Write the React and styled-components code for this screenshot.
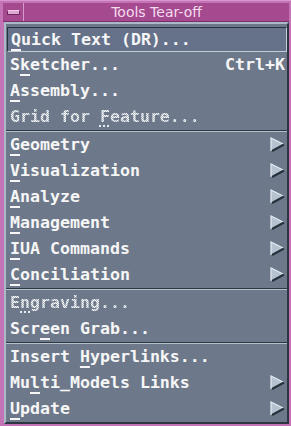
import React from 'react'
import styled, { createGlobalStyle } from 'styled-components'

const GlobalStyle = createGlobalStyle`
  html, body { margin: 0; padding: 0; background: #c276b4; }
`

const Window = styled.div`
  width: 291px;
  height: 426px;
  box-sizing: border-box;
  padding: 3px 2px 2px 4px;
  background: #c474b6;
  border-top: 1px solid #d896cc;
  display: flex;
  flex-direction: column;
`

const TitleBar = styled.div`
  height: 19px;
  flex: none;
  margin-top: -1px;
  margin-left: -1px;
  display: flex;
  background: #a54a8e;
  border-bottom: 1px solid #7a2c68;
  box-sizing: border-box;
`

const MenuButton = styled.div`
  width: 21px;
  flex: none;
  display: flex;
  align-items: center;
  justify-content: center;
  border-right: 1px solid #d89acb;
  box-sizing: border-box;
`

const MinusBar = styled.div`
  width: 11px;
  height: 3px;
  background: #e0a6d4;
  border: 1px solid #6e2860;
  border-top-color: #f0c8e8;
`

const Title = styled.div`
  flex: 1;
  text-align: center;
  font-family: "DejaVu Sans", sans-serif;
  font-size: 14px;
  line-height: 18px;
  color: #f4dcef;
`

const Panel = styled.div`
  flex: 1;
  background: #6d798b;
  border: 2px solid #aab8c8;
  border-right-color: #2e3642;
  border-bottom-color: #2e3642;
  padding-top: 2px;
  display: flex;
  flex-direction: column;
`

const Row = styled.div`
  height: 26px;
  flex: none;
  box-sizing: border-box;
  display: flex;
  align-items: center;
  justify-content: space-between;
  padding: 0 1px 1px 4px;
  font-family: "DejaVu Sans Mono", "Liberation Mono", monospace;
  font-weight: bold;
  font-size: 16.6px;
  line-height: 26px;
  color: ${p => (p.$disabled ? 'transparent' : '#f6f6f6')};
  white-space: pre;
  ${p => p.$selected && `
    margin: 1px 0 0 1px;
    height: 25px;
    padding-left: 3px;
    padding-bottom: 1px;
    background: #66728a;
    border: 1px solid #2a323e;
    border-right-color: #c0ccd8;
    border-bottom-color: #c0ccd8;
    line-height: 23px;
  `}
  ${p => p.$disabled && `
    background-image: repeating-conic-gradient(#ffffff 0 25%, #b4bdc8 0 50%);
    background-size: 2px 2px;
    -webkit-background-clip: text;
    background-clip: text;
  `}
`

const Label = styled.span``

const Mn = styled.span`
  text-decoration: underline;
  text-decoration-thickness: 2px;
  text-underline-offset: 4px;
  text-decoration-color: ${p => (p.$disabled ? '#e6ecf2' : '#f6f6f6')};
  text-decoration-style: ${p => (p.$disabled ? 'dotted' : 'solid')};
`

const Accel = styled.span`
  color: #f6f6f6;
  margin-right: 1px;
`

const Separator = styled.div`
  height: 1px;
  flex: none;
  background: #2e3642;
  border-bottom: 1px solid #b4c0cc;
`

const Arrow = () => (
  <svg width="15" height="15" viewBox="0 0 15 15" style={{ marginRight: 1 }}>
    <polygon points="1,1 14,7.5 1,14" fill="#b6c2cf" />
    <polyline points="1,14 1,1 14,7.5" fill="none" stroke="#e4ebf2" strokeWidth="1.2" />
    <polyline points="14,7.5 2,14" fill="none" stroke="#26303a" strokeWidth="2" />
  </svg>
)

const items = [
  { text: 'Quick Text (DR)...', m: 0, selected: true },
  { text: 'Sketcher...', m: 1, accel: 'Ctrl+K' },
  { text: 'Assembly...', m: 0 },
  { text: 'Grid for Feature...', m: 9, disabled: true },
  'sep',
  { text: 'Geometry', m: 0, sub: true },
  { text: 'Visualization', m: 0, sub: true },
  { text: 'Analyze', m: 0, sub: true },
  { text: 'Management', m: 0, sub: true },
  { text: 'IUA Commands', m: 0, sub: true },
  { text: 'Conciliation', m: 0, sub: true },
  'sep',
  { text: 'Engraving...', m: 1, disabled: true },
  { text: 'Screen Grab...', m: 3 },
  'sep',
  { text: 'Insert Hyperlinks...', m: 7 },
  { text: 'Multi_Models Links', m: 2, sub: true },
  { text: 'Update', m: 0, sub: true },
]

function MenuItem({ item }) {
  const { text, m, selected, disabled, accel, sub } = item
  return (
    <Row $selected={selected} $disabled={disabled}>
      <Label>
        {text.slice(0, m)}
        <Mn $disabled={disabled}>{text[m]}</Mn>
        {text.slice(m + 1)}
      </Label>
      {accel && <Accel>{accel}</Accel>}
      {sub && <Arrow />}
    </Row>
  )
}

export default function App() {
  return (
    <>
      <GlobalStyle />
      <Window>
        <TitleBar>
          <MenuButton>
            <MinusBar />
          </MenuButton>
          <Title>Tools Tear-off</Title>
        </TitleBar>
        <Panel>
          {items.map((item, i) =>
            item === 'sep' ? <Separator key={i} /> : <MenuItem key={i} item={item} />
          )}
        </Panel>
      </Window>
    </>
  )
}
